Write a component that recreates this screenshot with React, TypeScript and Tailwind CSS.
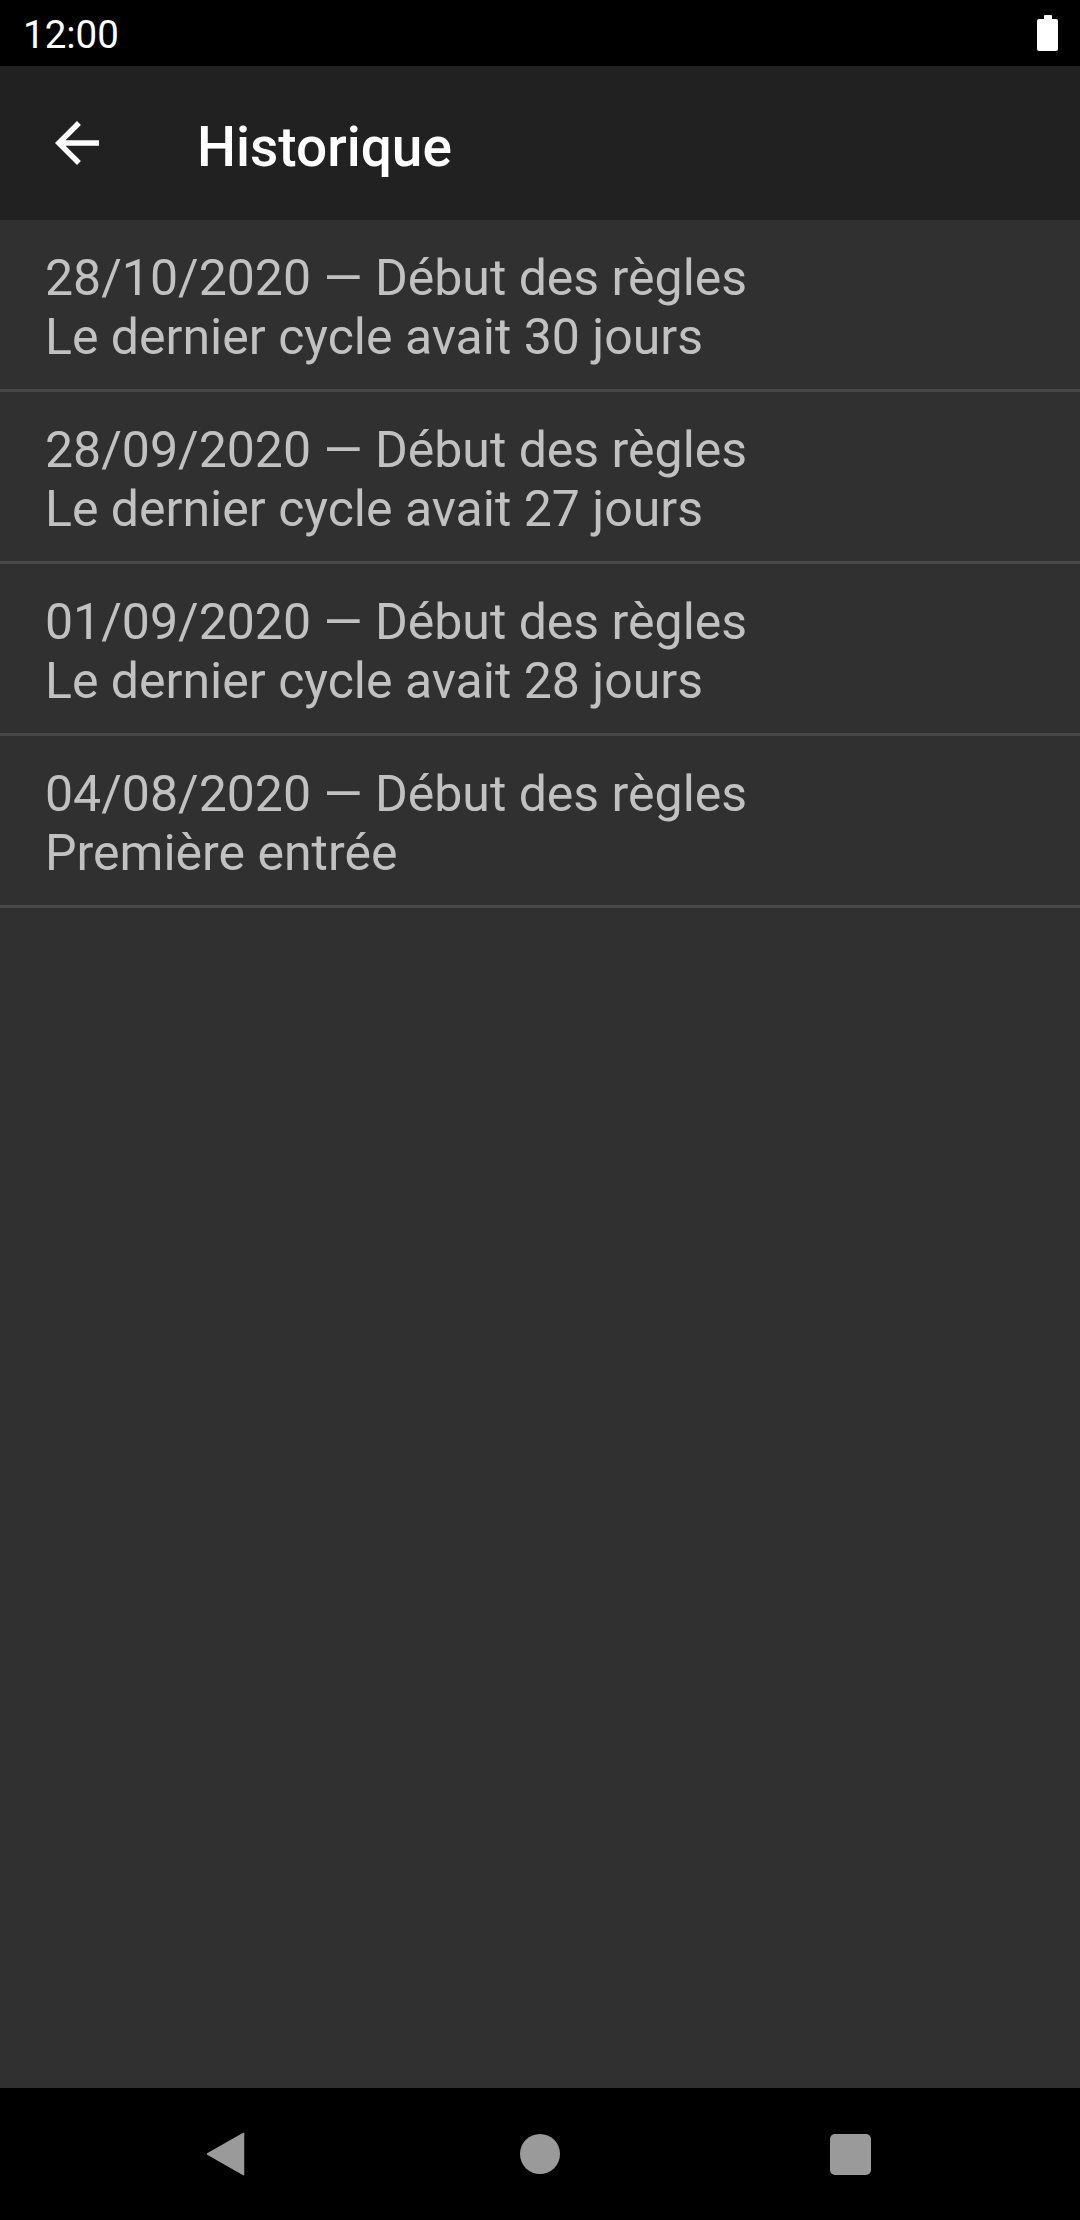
const entries = [
  { date: "28/10/2020", note: "Le dernier cycle avait 30 jours" },
  { date: "28/09/2020", note: "Le dernier cycle avait 27 jours" },
  { date: "01/09/2020", note: "Le dernier cycle avait 28 jours" },
  { date: "04/08/2020", note: "Première entrée" },
];

const font = { fontFamily: "Roboto, 'Noto Sans', sans-serif" };

export default function App() {
  return (
    <div className="flex h-[2220px] w-[1080px] flex-col bg-[#303030]" style={font}>
      {/* status bar */}
      <div className="flex h-[66px] flex-none items-center justify-between bg-black pl-[23px] pr-[22px]">
        <span className="pt-[4px] text-[38.5px] leading-[66px] text-white">12:00</span>
        <Battery />
      </div>

      {/* toolbar */}
      <div className="flex h-[154px] flex-none items-center bg-[#212121] pl-[44px]">
        <svg viewBox="0 0 24 24" className="h-[66px] w-[66px] fill-white">
          <path d="M20 11H7.83l5.59-5.59L12 4l-8 8 8 8 1.41-1.41L7.83 13H20v-2z" />
        </svg>
        <h1 className="ml-[87px] mt-[8px] text-[55px] font-medium leading-[64px] text-white">Historique</h1>
      </div>

      {/* list */}
      <div className="flex-1">
        {entries.map((e) => (
          <div key={e.date}>
            <div className="h-[169.3px] pl-[45px] pt-[29.3px] text-[50px] leading-[58.3px] text-[#c1c1c1]">
              <p>{e.date} — Début des règles</p>
              <p>{e.note}</p>
            </div>
            <div className="h-[2.7px] bg-[#484848]" />
          </div>
        ))}
      </div>

      {/* nav bar */}
      <div className="flex h-[132px] flex-none items-center bg-black pl-[205px]">
        <svg viewBox="0 0 40 48" className="h-[48px] w-[40px]">
          <path d="M38.5 3.3 L2.5 24 L38.5 44.7 Z" fill="#9a9a9a" stroke="#9a9a9a" strokeWidth="1.5" strokeLinejoin="round" />
        </svg>
        <div className="ml-[275px] h-[40px] w-[40px] rounded-full bg-[#9a9a9a]" />
        <div className="ml-[270px] h-[41px] w-[41px] rounded-[5px] bg-[#9a9a9a]" />
      </div>
    </div>
  );
}

function Battery() {
  return (
    <div className="flex flex-col items-center">
      <div className="h-[4px] w-[8px] rounded-t-[1px] bg-white" />
      <div className="h-[32px] w-[21px] rounded-[2px] bg-white" />
    </div>
  );
}
